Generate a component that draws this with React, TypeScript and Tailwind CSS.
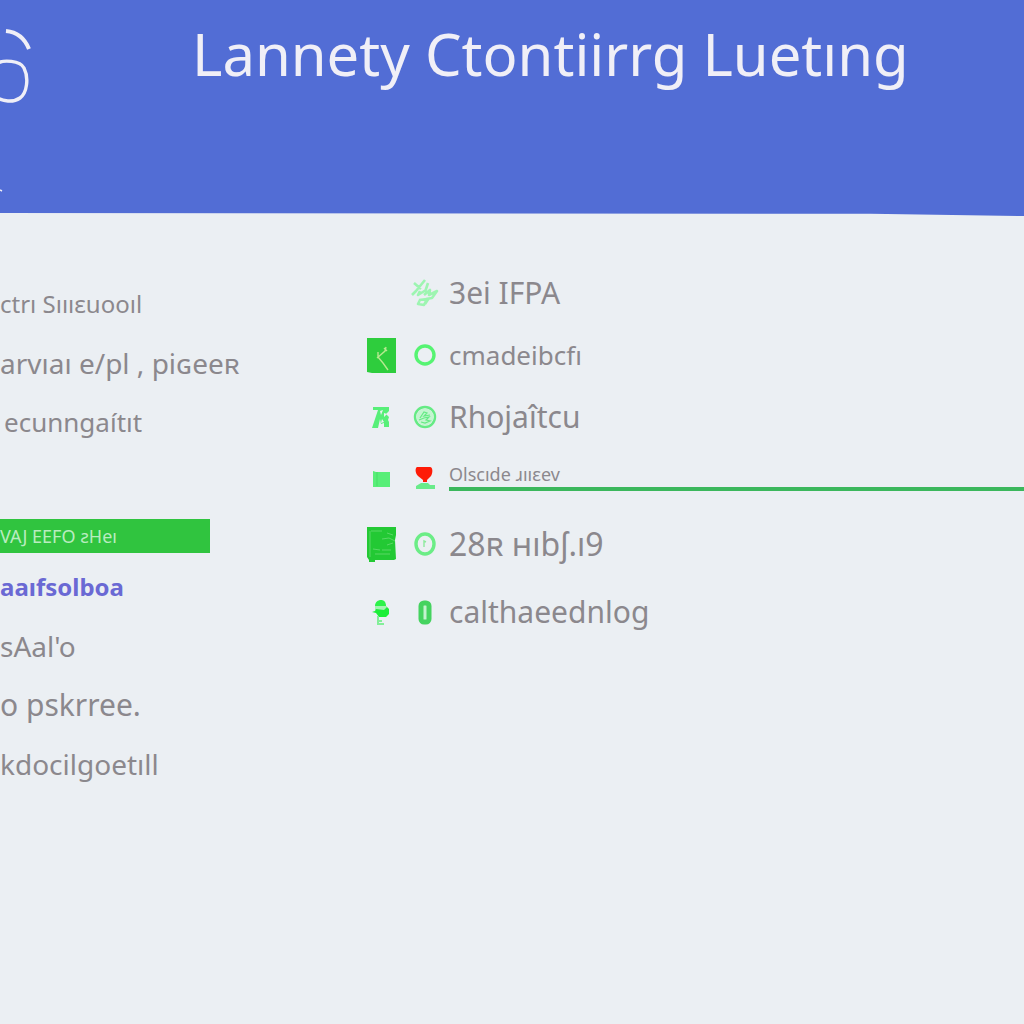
import type { ReactNode } from "react";

type NavItem = { label: string; className: string };

const primaryLinks: NavItem[] = [
  { label: "ctrı Sıııɛuooıl", className: "text-2xl" },
  { label: "arvıaı e/pl , piɢeeʀ", className: "text-[28px]" },
  { label: "ecunngaítıt", className: "ml-1 text-[26px]" },
];

const secondaryLinks: NavItem[] = [
  { label: "aaıfsolboa", className: "text-2xl font-bold text-[#6a69d4]" },
  { label: "sAal'o", className: "text-[28px]" },
  { label: "o pskrree.", className: "text-[30px]" },
  { label: "kdocilgoetıll", className: "text-[28px]" },
];

function NavList({ items }: { items: NavItem[] }) {
  return (
    <ul>
      {items.map((item) => (
        <li key={item.label} className="flex h-[59px] items-center">
          <a href="#" className={"whitespace-nowrap leading-none " + item.className}>
            {item.label}
          </a>
        </li>
      ))}
    </ul>
  );
}

function LeafIcon() {
  return (
    <svg viewBox="0 0 30 30" className="size-[30px]" fill="none" stroke="#9df5b1" strokeWidth="2.6" strokeLinejoin="round" aria-hidden="true">
      <path d="M4 5l7 6M15 2L6 13l-4 4M10 13l-2 4 8-5M18 5l-3 9M14 17l6-5-1 5 8-4-5 7-6 1M9 22l8-1-3 6-6-1 2-4M19 20l-4 6" />
    </svg>
  );
}

function ArrowTile() {
  return (
    <svg viewBox="0 0 29 35" className="h-[35px] w-[29px]" aria-hidden="true">
      <path d="M0 0h29v35H5l-5-1z" fill="#2ecd3d" />
      <path d="M11 14v5M10 20l8-7 1-4M17 10l3 3M11 19l5 6 5 7" fill="none" stroke="#b6e98f" strokeWidth="1.4" />
    </svg>
  );
}

function RingIcon() {
  return (
    <svg viewBox="0 0 22 22" className="size-[22px]" aria-hidden="true">
      <circle cx="11" cy="11" r="9" fill="none" stroke="#56f472" strokeWidth="3.4" />
    </svg>
  );
}

function FigureIcon() {
  return (
    <svg viewBox="0 0 18 23" className="h-[23px] w-[18px]" fill="#57ef78" aria-hidden="true">
      <path d="M1 1h16v4l-3 3 3 3-1 3 1 2v5h-5v-4l-3 1-1-5-2 9H0l4-12 2-6H1z" />
      <path d="M8 5l3-1-2 5zM12 7l3 1-3 3zM10 13l2 3-3 1z" fill="#ebeff3" />
    </svg>
  );
}

function CoinIcon() {
  return (
    <svg viewBox="0 0 24 24" className="size-6" fill="none" stroke="#65eb84" aria-hidden="true">
      <circle cx="12" cy="12" r="10" strokeWidth="2.4" />
      <circle cx="12" cy="12" r="8.5" fill="#c4f5d0" stroke="none" />
      <path d="M7 13l4-6 3 1-3 3 6-1M6 15l5-2 5-1-3 3 4 1-5 2-4-1" strokeWidth="1.2" />
    </svg>
  );
}

function BlockIcon() {
  return (
    <svg viewBox="0 0 17 17" className="size-[17px]" aria-hidden="true">
      <path d="M0 1l3 1h14v15H0z" fill="#58ee78" />
      <path d="M4 2v14" stroke="#47df66" />
    </svg>
  );
}

function MarkerIcon() {
  return (
    <svg viewBox="0 0 20 24" className="h-6 w-5" aria-hidden="true">
      <path d="M1 20l5-3h7l2 2h5v4H1z" fill="#69eb8a" />
      <path d="M2 1h13c3 0 3 6 1 9l-4 4v2H8v-2L3 10C0 7 0 2 2 1z" fill="#fe1b07" />
    </svg>
  );
}

function BookIcon() {
  return (
    <svg viewBox="0 0 29 35" className="h-[35px] w-[29px]" aria-hidden="true">
      <path d="M0 0h29v8l-1 5 1 19-2 1H8v2H2v-2l-2-3z" fill="#23c934" />
      <path d="M3 4v26M4 4h11M20 6l6 2M15 12l7-1 6 3M6 22l7 1M15 23h9M8 27h15M20 18l6-2" fill="none" stroke="#68dc72" strokeWidth="0.8" />
    </svg>
  );
}

function InfoRing() {
  return (
    <svg viewBox="0 0 22 24" className="h-6 w-[22px]" fill="none" aria-hidden="true">
      <ellipse cx="11" cy="12" rx="9" ry="10" stroke="#6bed86" strokeWidth="3.4" />
      <path d="M10 15V9l2 1" stroke="#8eea9e" strokeWidth="1.4" />
    </svg>
  );
}

function BirdIcon() {
  return (
    <svg viewBox="0 0 18 26" className="h-[26px] w-[18px]" aria-hidden="true">
      <path d="M3 7c0-4 3-6 6-6s5 2 5 6H3z" fill="#2df24a" />
      <path d="M3 7h12v4H3z" fill="#a3f4b2" />
      <path d="M4 10l8 1 3-3 2 2v5l-3 3H7l-3-4-4-1 3-1z" fill="#1dee39" />
      <path d="M6 17v8h6M6 22h4" fill="none" stroke="#83ef99" strokeWidth="2" />
    </svg>
  );
}

function PillIcon() {
  return (
    <svg viewBox="0 0 14 25" className="h-[25px] w-3.5" aria-hidden="true">
      <rect x="3" y="3" width="8" height="19" rx="3" fill="#c4f2ce" stroke="#45d35f" strokeWidth="5" />
    </svg>
  );
}

type Entry = { label: string; row: string; text: string; left?: ReactNode; right: ReactNode };

const entries: Entry[] = [
  { label: "3ei IFPA", row: "h-[62px]", text: "text-[30px]", right: <LeafIcon /> },
  { label: "cmadeibcfı", row: "h-[62px]", text: "text-[26px]", left: <ArrowTile />, right: <RingIcon /> },
  { label: "Rhojaîtcu", row: "h-[62px]", text: "text-[30px]", left: <FigureIcon />, right: <CoinIcon /> },
  { label: "28ʀ ʜıbʃ.ı9", row: "h-[72px]", text: "text-[32px]", left: <BookIcon />, right: <InfoRing /> },
  { label: "calthaeednlog", row: "h-16", text: "text-[30px]", left: <BirdIcon />, right: <PillIcon /> },
];

function IconPair({ left, right }: { left?: ReactNode; right: ReactNode }) {
  return (
    <>
      <span className="flex w-8 shrink-0 justify-center">{left}</span>
      <span className="ml-3 flex w-8 shrink-0 justify-center">{right}</span>
    </>
  );
}

function EntryRow({ entry }: { entry: Entry }) {
  return (
    <li className={"flex items-center " + entry.row}>
      <IconPair left={entry.left} right={entry.right} />
      <span className={"ml-2 whitespace-nowrap leading-none " + entry.text}>{entry.label}</span>
    </li>
  );
}

export default function App() {
  return (
    <div className="min-h-screen overflow-hidden bg-[#ebeff3] font-['Noto_Sans',sans-serif] text-[#8b888d]">
      <header className="flex h-[216px] bg-[#526dd5] text-[#f0eff7] [clip-path:polygon(0_0,100%_0,100%_100%,85%_99%,0_98.6%)]">
        <div className="w-48 shrink-0">
          <svg viewBox="0 0 40 200" className="h-[200px] w-10" fill="none" stroke="#f0eff7" aria-hidden="true">
            <path d="M6 31c11 1 19 8 23 18" strokeWidth="4" />
            <path d="M-2 63c5-3 22-3 26 5 5 10 3 25-4 30-7 5-18 3-22 0" strokeWidth="3.4" />
            <path d="M0 190l2 1" strokeWidth="1.5" />
          </svg>
        </div>
        <h1 className="whitespace-nowrap pt-5 text-[58px] leading-[68px]">Lannety Ctontiirrg Luetıng</h1>
      </header>
      <div className="flex">
        <nav aria-label="Sections" className="w-[365px] shrink-0 pt-[58px]">
          <NavList items={primaryLinks} />
          <button type="button" className="mt-[68px] mb-1 flex h-[34px] w-[210px] items-center bg-[#30c43f] text-left text-lg leading-none text-[#b9ecc0]">
            <span className="whitespace-nowrap">VAJ EEFO ƨHeı</span>
          </button>
          <NavList items={secondaryLinks} />
        </nav>
        <main className="min-w-0 flex-1 pt-[46px]">
          <ul>
            {entries.slice(0, 3).map((entry) => (
              <EntryRow key={entry.label} entry={entry} />
            ))}
            <li className="flex h-15 items-center">
              <IconPair left={<BlockIcon />} right={<MarkerIcon />} />
              <span className="ml-2 flex-1 whitespace-nowrap border-b-4 border-[#3bb75c] pb-1 text-lg leading-none">
                Olscıde ɹııɛev
              </span>
            </li>
            {entries.slice(3).map((entry) => (
              <EntryRow key={entry.label} entry={entry} />
            ))}
          </ul>
        </main>
      </div>
    </div>
  );
}
